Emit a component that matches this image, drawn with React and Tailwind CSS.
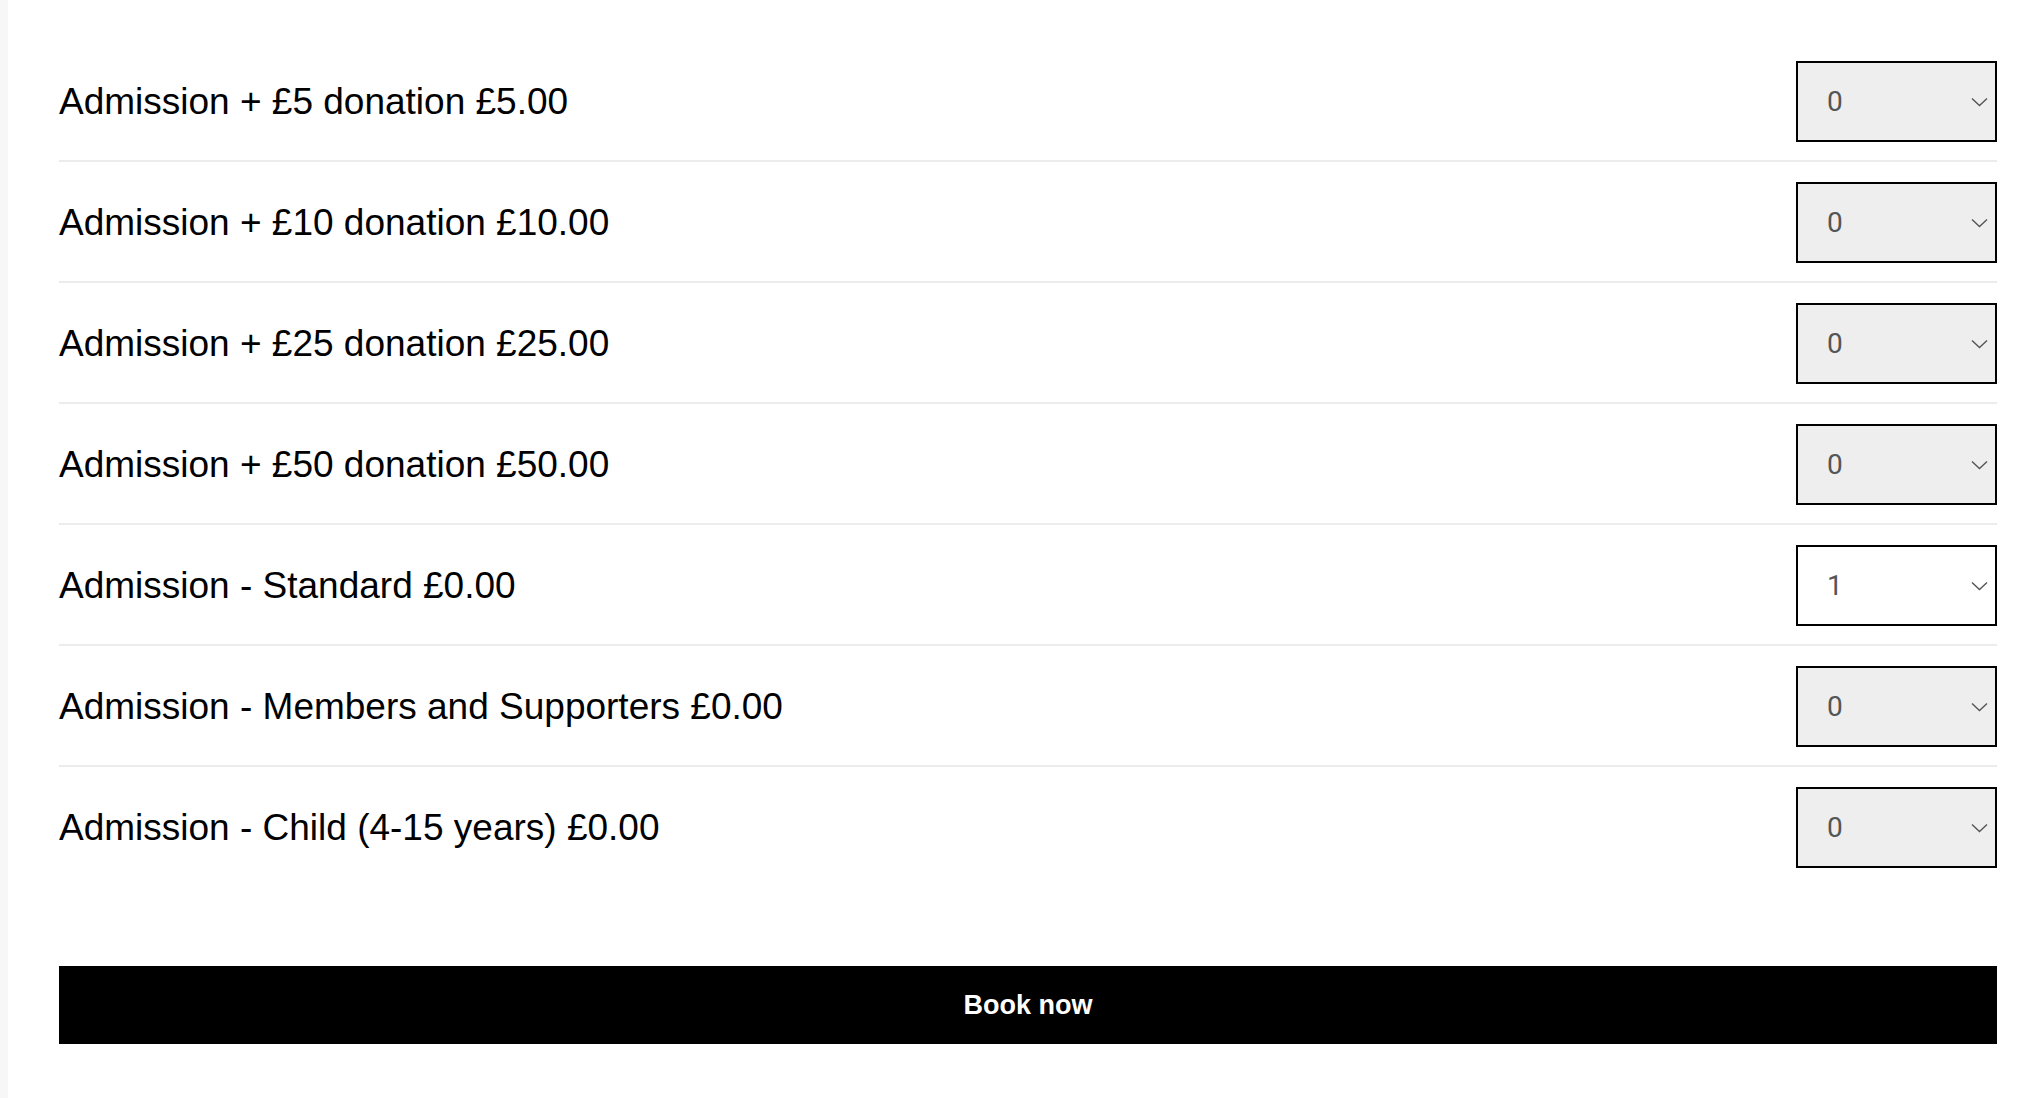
import React, { useState } from 'react';

const tickets = [
  { id: 'd5', label: 'Admission + £5 donation £5.00', qty: 0 },
  { id: 'd10', label: 'Admission + £10 donation £10.00', qty: 0 },
  { id: 'd25', label: 'Admission + £25 donation £25.00', qty: 0 },
  { id: 'd50', label: 'Admission + £50 donation £50.00', qty: 0 },
  { id: 'std', label: 'Admission - Standard £0.00', qty: 1 },
  { id: 'mem', label: 'Admission - Members and Supporters £0.00', qty: 0 },
  { id: 'child', label: 'Admission - Child (4-15 years) £0.00', qty: 0 },
];

const QtySelect = ({ value, onChange }) => (
  <div className="relative w-[201px] shrink-0">
    <select
      value={value}
      onChange={(e) => onChange(Number(e.target.value))}
      className={`block w-full h-[81px] appearance-none border-2 border-black rounded-none pl-[29px] pr-10 text-[28px] text-[#555] font-['Roboto',sans-serif] outline-none ${
        value > 0 ? 'bg-white' : 'bg-[#eeeeee]'
      }`}
    >
      {[0, 1, 2, 3, 4, 5, 6, 7, 8, 9, 10].map((n) => (
        <option key={n} value={n}>{n}</option>
      ))}
    </select>
    <svg
      className="pointer-events-none absolute right-[9px] top-1/2 -translate-y-1/2"
      width="17"
      height="10"
      viewBox="0 0 17 10"
      fill="none"
    >
      <path d="M1 1.5l7.5 7 7.5-7" stroke="#555" strokeWidth="1.4" />
    </svg>
  </div>
);

const App = () => {
  const [qty, setQty] = useState(() =>
    Object.fromEntries(tickets.map((t) => [t.id, t.qty]))
  );

  return (
    <div className="flex min-h-[1098px] bg-white font-['Liberation_Sans',Arial,sans-serif] text-black">
      <div className="w-[8px] shrink-0 bg-[#f7f7f7]" />
      <div className="flex-1 pl-[51px] pr-[41px] pt-[41px]">
        <div>
          {tickets.map((t, i) => (
            <div
              key={t.id}
              className={`flex items-center justify-between pt-[20px] pb-[18px] ${
                i < tickets.length - 1 ? 'border-b-2 border-[#ececec]' : ''
              }`}
            >
              <span className="text-[37px] leading-none">{t.label}</span>
              <QtySelect
                value={qty[t.id]}
                onChange={(v) => setQty((q) => ({ ...q, [t.id]: v }))}
              />
            </div>
          ))}
        </div>
        <button className="mt-[80px] flex h-[78px] w-full items-center justify-center bg-black text-[27px] font-bold text-white">
          Book now
        </button>
      </div>
    </div>
  );
};

export default App;
